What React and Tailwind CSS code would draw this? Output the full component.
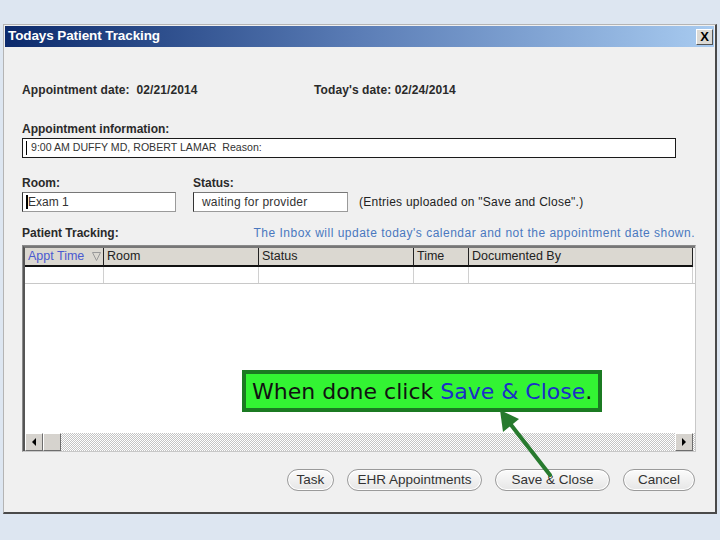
import React from 'react';

const cols = [
  { label: 'Appt Time', w: 'w-[79px]', blue: true },
  { label: 'Room', w: 'w-[155px]' },
  { label: 'Status', w: 'w-[155px]' },
  { label: 'Time', w: 'w-[55px]' },
  { label: 'Documented By', w: 'w-[224px]' },
];

const Btn = ({ children, w }) => (
  <button className={`${w} h-[22px] rounded-full border border-[#9a9a9a] bg-gradient-to-b from-[#fbfbfb] to-[#e6e6e6] text-[13.5px] leading-none text-[#333] shadow-[inset_0_0_0_1px_#fff]`}>
    {children}
  </button>
);

const ArrowBtn = ({ dir }) => (
  <div className="w-[18px] h-[18px] bg-[#d6d3ce] border border-t-white border-l-white border-r-[#6d6d6d] border-b-[#6d6d6d] flex items-center justify-center">
    <svg width="6" height="8" viewBox="0 0 6 8">
      {dir === 'left' ? <path d="M5 0 L1 4 L5 8 Z" fill="#000" /> : <path d="M1 0 L5 4 L1 8 Z" fill="#000" />}
    </svg>
  </div>
);

export default function App() {
  return (
    <div className="relative w-[720px] h-[540px] bg-[#dde6f1] pt-[24px] pl-[3px] font-['Liberation_Sans',Arial,sans-serif] overflow-hidden">
      <div className="w-[714px] h-[490px] bg-[#f0f0f0] border border-[#b4b4b4] border-r-2 border-r-[#4a4a4a] border-b-2 border-b-[#4a4a4a] flex flex-col">
        {/* title bar */}
        <div className="h-[21px] mx-[1px] mt-[1px] bg-gradient-to-r from-[#0c2a6c] via-[#5b7db6] to-[#a8cbf0] flex items-center justify-between pl-[3px] pr-[1px]">
          <span className="text-white font-bold text-[13.5px] tracking-[-0.1px]">Todays Patient Tracking</span>
          <div className="w-[17px] h-[16px] bg-[#dcdad5] border border-t-white border-l-white border-r-[#555] border-b-[#555] flex items-center justify-center text-[13px] font-bold leading-none text-black">
            X
          </div>
        </div>

        <div className="pl-[18px] pr-[20px] flex flex-col">
          <div className="mt-[35px] h-[16px] flex text-[12px] font-bold text-[#2a2a2a] leading-[16px] tracking-[0.1px]">
            <span className="w-[292px]">Appointment date:&nbsp; 02/21/2014</span>
            <span>Today's date: 02/24/2014</span>
          </div>

          <div className="mt-[23px] h-[16px] text-[12px] font-bold text-[#2a2a2a] leading-[16px]">Appointment information:</div>
          <div className="mt-[1px] w-[654px] h-[20px] bg-white border border-[#1a1a1a] flex items-center pl-[3px] text-[10.6px] text-[#333]">
            <span className="w-[1px] h-[14px] bg-black mr-[4px]"></span>
            9:00 AM DUFFY MD, ROBERT LAMAR&nbsp; Reason:
          </div>

          <div className="mt-[17px] h-[16px] flex text-[12px] font-bold text-[#2a2a2a] leading-[16px]">
            <span className="w-[171px]">Room:</span>
            <span>Status:</span>
          </div>
          <div className="mt-[1px] flex items-center">
            <div className="w-[154px] h-[20px] bg-white border border-[#9a9a9a] border-l-[#333] border-t-[#777] flex items-center pl-[3px] text-[12px] text-[#333]">
              <span className="w-[2px] h-[14px] bg-black"></span>Exam 1
            </div>
            <div className="ml-[17px] w-[155px] h-[20px] bg-white border border-[#9a9a9a] border-l-[#333] border-t-[#777] flex items-center pl-[8px] text-[12px] text-[#333] tracking-[0.2px]">
              waiting for provider
            </div>
            <span className="ml-[11px] text-[12px] text-[#222] tracking-[0.25px]">(Entries uploaded on "Save and Close".)</span>
          </div>

          <div className="mt-[13px] h-[16px] flex justify-between text-[12px] leading-[16px]">
            <span className="font-bold text-[#2a2a2a]">Patient Tracking:</span>
            <span className="text-[#4a78bf] tracking-[0.5px]">The Inbox will update today's calendar and not the appointment date shown.</span>
          </div>

          {/* grid */}
          <div className="mt-[4px] w-[674px] h-[207px] border border-[#8a8a8a] border-r-[#c8c8c8] border-b-[#c8c8c8] flex flex-col">
            <div className="flex-1 border-l-2 border-t-2 border-l-[#555] border-t-[#777] bg-white flex flex-col">
              <div className="flex h-[19px] bg-[#f0f0f0]">
                {cols.map((c, i) => (
                  <div
                    key={i}
                    className={`${c.w} h-[19px] bg-[#dbd8d1] border-r border-r-[#222] border-b-2 border-b-[#111] flex items-center pl-[3px] text-[12.5px] ${c.blue ? 'text-[#4a5ad0] justify-between pr-[2px]' : 'text-[#222]'}`}
                  >
                    {c.label}
                    {c.blue && (
                      <svg width="9" height="9" viewBox="0 0 9 9">
                        <path d="M0.5 0.5 L8.5 0.5 L4.5 8.5 Z" fill="none" stroke="#999" strokeWidth="1" />
                      </svg>
                    )}
                  </div>
                ))}
              </div>
              <div className="flex h-[17px] border-b border-b-[#c8c8c8]">
                {cols.map((c, i) => (
                  <div key={i} className={`${c.w} h-full border-r border-r-[#d0d0d0]`}></div>
                ))}
              </div>
              <div className="flex-1"></div>
              <div className="flex h-[18px] bg-[repeating-conic-gradient(#c4c4c4_0_25%,#ffffff_0_50%)] bg-[length:2px_2px]">
                <ArrowBtn dir="left" />
                <div className="w-[18px] h-[18px] bg-[#d6d3ce] border border-t-white border-l-white border-r-[#6d6d6d] border-b-[#6d6d6d]"></div>
                <div className="flex-1"></div>
                <ArrowBtn dir="right" />
                <div className="w-[2px]"></div>
              </div>
            </div>
          </div>

          <div className="mt-[17px] flex justify-end gap-[13px]">
            <Btn w="w-[47px]">Task</Btn>
            <Btn w="w-[135px]">EHR Appointments</Btn>
            <Btn w="w-[115px]">Save &amp; Close</Btn>
            <Btn w="w-[72px]">Cancel</Btn>
          </div>
        </div>
      </div>

      {/* callout */}
      <div className="absolute left-[242px] top-[370px] w-[360px] h-[42px] bg-[#33f433] border-[4px] border-[#1b7a22] flex items-center pl-[6px] text-[22px] font-['DejaVu_Sans',sans-serif] text-[#111] whitespace-nowrap">
        When done click&nbsp;<span className="text-[#1a2fc8]">Save &amp; Close</span>.
      </div>
      <svg className="absolute left-0 top-0" width="720" height="540" viewBox="0 0 720 540">
        <line x1="550" y1="475" x2="508" y2="421" stroke="#277a2e" strokeWidth="4" strokeLinecap="round" />
        <path d="M500 410 L503 432 L519 419 Z" fill="#277a2e" />
      </svg>
    </div>
  );
}
